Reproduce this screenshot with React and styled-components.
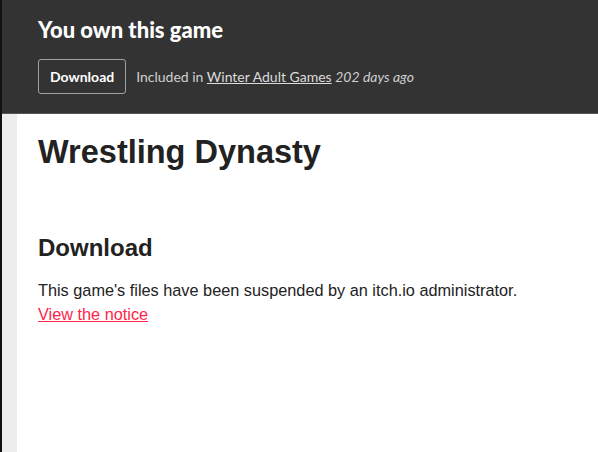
import React from 'react';
import styled, { createGlobalStyle } from 'styled-components';

const GlobalStyle = createGlobalStyle`
  html, body {
    margin: 0;
    padding: 0;
    height: 100%;
    background: #fff;
  }
  #root {
    height: 100%;
  }
`;

const Shell = styled.div`
  display: flex;
  height: 100%;
  min-height: 452px;
`;

const EdgeStrip = styled.div`
  width: 2px;
  flex-shrink: 0;
  background: #111;
`;

const Page = styled.div`
  flex: 1;
  display: flex;
  flex-direction: column;
`;

const OwnerBar = styled.header`
  background: #333;
  border-bottom: 1px solid #555;
  height: 114px;
  box-sizing: border-box;
  padding: 17px 0 0 36px;
  font-family: Lato, 'Liberation Sans', sans-serif;
  color: #fff;
`;

const OwnerTitle = styled.h2`
  margin: 0;
  font-size: 22px;
  line-height: 26px;
  font-weight: 900;
`;

const OwnerRow = styled.div`
  display: flex;
  align-items: center;
  gap: 10px;
  margin-top: 16px;
`;

const OutlineButton = styled.button`
  font-family: inherit;
  font-size: 14px;
  font-weight: 700;
  color: #fff;
  background: transparent;
  border: 1px solid #a0a0a0;
  border-radius: 3px;
  height: 35px;
  padding: 0 11px;
  cursor: pointer;
`;

const Purchase = styled.div`
  font-size: 14px;
  color: #cfcfcf;

  a {
    color: #dcdcdc;
    text-decoration: underline;
  }

  em {
    font-style: italic;
  }
`;

const BodyRow = styled.div`
  flex: 1;
  display: flex;
`;

const Gutter = styled.div`
  width: 15px;
  flex-shrink: 0;
  background: #ededed;
`;

const Content = styled.main`
  flex: 1;
  padding: 19px 0 0 21px;
  font-family: Arial, 'Liberation Sans', sans-serif;
  color: #222;
`;

const GameTitle = styled.h1`
  margin: 0;
  font-size: 32.5px;
  line-height: 38px;
  font-weight: 700;
`;

const SectionTitle = styled.h2`
  margin: 62px 0 0;
  font-size: 24px;
  line-height: 29px;
  font-weight: 700;
`;

const Notice = styled.p`
  margin: 16px 0 0;
  font-size: 16.3px;
  line-height: 24px;

  a {
    color: #ff2449;
    text-decoration: underline;
  }
`;

export default function App() {
  return (
    <>
      <GlobalStyle />
      <Shell>
        <EdgeStrip />
        <Page>
          <OwnerBar>
            <OwnerTitle>You own this game</OwnerTitle>
            <OwnerRow>
              <OutlineButton>Download</OutlineButton>
              <Purchase>
                Included in <a href="#">Winter Adult Games</a> <em>202 days ago</em>
              </Purchase>
            </OwnerRow>
          </OwnerBar>
          <BodyRow>
            <Gutter />
            <Content>
              <GameTitle>Wrestling Dynasty</GameTitle>
              <SectionTitle>Download</SectionTitle>
              <Notice>
                This game's files have been suspended by an itch.io administrator.
                <br />
                <a href="#">View the notice</a>
              </Notice>
            </Content>
          </BodyRow>
        </Page>
      </Shell>
    </>
  );
}
